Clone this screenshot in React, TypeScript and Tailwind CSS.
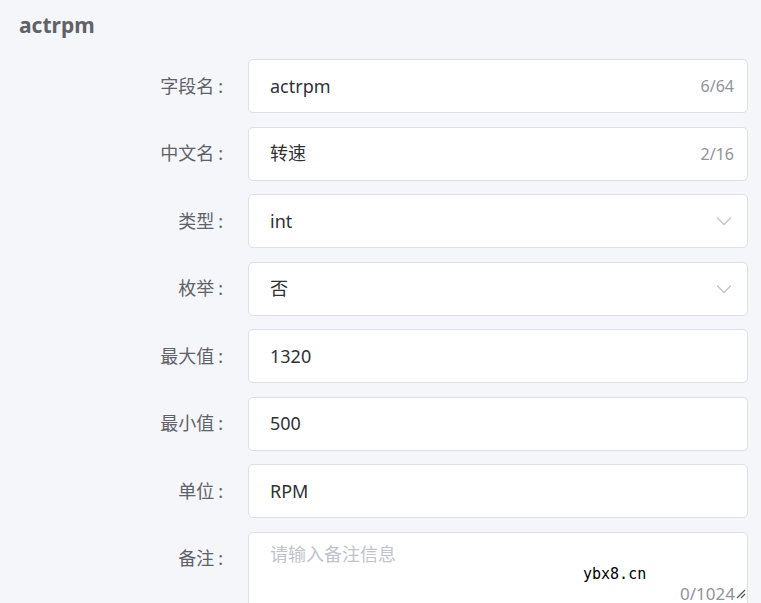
const font = { fontFamily: '"Noto Sans", "Noto Sans CJK SC", sans-serif' };

function Label({ text }: { text: string }) {
  return (
    <div className="w-[248px] shrink-0 pr-[25px] text-right text-[18px] text-[#606266]">
      {text}
      <span className="ml-[4px]">:</span>
    </div>
  );
}

function TextRow({ label, value, count }: { label: string; value: string; count?: string }) {
  return (
    <div className="flex items-center h-[54px]">
      <Label text={label} />
      <div className="flex items-center w-[500px] h-full bg-white border border-[#dcdfe6] rounded-[5px] pl-[21px] pr-[13px]">
        <span className="flex-1 text-[18px] text-[#303133]">{value}</span>
        {count && <span className="text-[16px] text-[#909399]">{count}</span>}
      </div>
    </div>
  );
}

function SelectRow({ label, value }: { label: string; value: string }) {
  return (
    <div className="flex items-center h-[54px]">
      <Label text={label} />
      <div className="flex items-center w-[500px] h-full bg-white border border-[#dcdfe6] rounded-[5px] pl-[21px] pr-[15px]">
        <span className="flex-1 text-[18px] text-[#303133]">{value}</span>
        <svg width="16" height="10" viewBox="0 0 16 10" fill="none">
          <path d="M1 1.5L8 8.5L15 1.5" stroke="#c0c4cc" strokeWidth="1.4" />
        </svg>
      </div>
    </div>
  );
}

export default function App() {
  return (
    <div className="w-[761px] h-[603px] overflow-hidden bg-[#f5f6fa]" style={font}>
      <h1 className="pl-[19px] pt-[10px] h-[59px] text-[21px] font-bold text-[#606266] leading-[30px]">actrpm</h1>
      <div className="flex flex-col gap-[13.5px]">
        <TextRow label="字段名" value="actrpm" count="6/64" />
        <TextRow label="中文名" value="转速" count="2/16" />
        <SelectRow label="类型" value="int" />
        <SelectRow label="枚举" value="否" />
        <TextRow label="最大值" value="1320" />
        <TextRow label="最小值" value="500" />
        <TextRow label="单位" value="RPM" />
        <div className="flex items-start">
          <div className="pt-[13px]">
            <Label text="备注" />
          </div>
          <div className="relative w-[500px] h-[90px] bg-white border border-[#dcdfe6] rounded-[5px] pl-[21px] pt-[8px]">
            <span className="text-[18px] text-[#c0c4cc]">请输入备注信息</span>
            <span className="absolute left-[334px] top-[30px] text-[15px] text-black" style={{ fontFamily: '"DejaVu Sans Mono", monospace' }}>
              ybx8.cn
            </span>
            <span className="absolute right-[12px] top-[48px] text-[17px] text-[#909399]">0/1024</span>
            <svg className="absolute right-[1px] top-[54px]" width="12" height="12" viewBox="0 0 12 12">
              <path d="M11 3L3 11M11 7L7 11" stroke="#555" strokeWidth="1.2" />
            </svg>
          </div>
        </div>
      </div>
    </div>
  );
}
